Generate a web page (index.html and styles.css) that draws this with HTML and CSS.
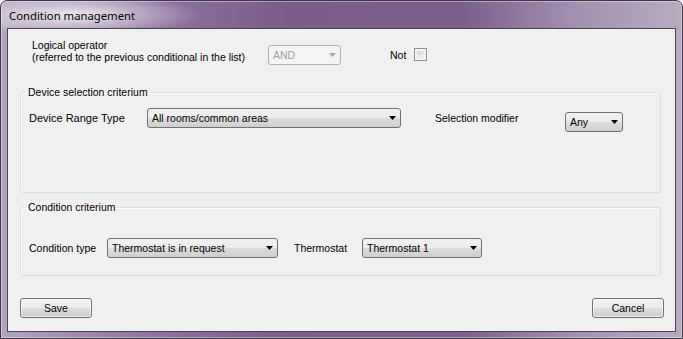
FILE: index.html
```html
<!DOCTYPE html>
<html>
<head>
    <title>Condition management</title>
    <meta charset="UTF-8">
    <link rel="stylesheet" href="styles.css">
</head>
<body>

<div class="window">
    <div class="titlebar">Condition management</div>

    <div class="client">

        <div class="operator-row">
            <div class="operator-label">
                Logical operator<br>
                (referred to the previous conditional in the list)
            </div>
            <div class="combo disabled operator-combo">
                <span>AND</span>
                <svg class="arrow" width="7" height="4" viewBox="0 0 7 4"><polygon points="0,0 7,0 3.5,4"/></svg>
            </div>
            <div class="not-label">Not</div>
            <div class="checkbox"></div>
        </div>

        <fieldset class="group device-group">
            <legend>Device selection criterium</legend>
            <div class="group-row">
                <div class="field-label range-label">Device Range Type</div>
                <div class="combo range-combo">
                    <span>All rooms/common areas</span>
                    <svg class="arrow" width="7" height="4" viewBox="0 0 7 4"><polygon points="0,0 7,0 3.5,4"/></svg>
                </div>
                <div class="field-label modifier-label">Selection modifier</div>
                <div class="combo modifier-combo">
                    <span>Any</span>
                    <svg class="arrow" width="7" height="4" viewBox="0 0 7 4"><polygon points="0,0 7,0 3.5,4"/></svg>
                </div>
            </div>
        </fieldset>

        <fieldset class="group condition-group">
            <legend>Condition criterium</legend>
            <div class="group-row">
                <div class="field-label type-label">Condition type</div>
                <div class="combo type-combo">
                    <span>Thermostat is in request</span>
                    <svg class="arrow" width="7" height="4" viewBox="0 0 7 4"><polygon points="0,0 7,0 3.5,4"/></svg>
                </div>
                <div class="field-label thermostat-label">Thermostat</div>
                <div class="combo thermostat-combo">
                    <span>Thermostat 1</span>
                    <svg class="arrow" width="7" height="4" viewBox="0 0 7 4"><polygon points="0,0 7,0 3.5,4"/></svg>
                </div>
            </div>
        </fieldset>

        <div class="button-row">
            <div class="button">Save</div>
            <div class="button">Cancel</div>
        </div>

    </div>
</div>

</body>
</html>
```

FILE: styles.css
```css
html {
    box-sizing: border-box;
}
*, *:before, *:after {
    box-sizing: inherit;
}

body{
    margin: 0;
    font-family: "Liberation Sans", Arial, sans-serif;
    font-size: 10.5px;
    color: #000;
    background: #fff;
}

/* window frame */

.window{
    width: 683px;
    height: 339px;
    padding: 27px 6px 6px 6px;
    border: 1px solid #3f3548;
    border-radius: 7px 7px 0 0;
    box-shadow: inset 0 0 0 1px rgba(255, 255, 255, 0.4);
    background:
        radial-gradient(ellipse 130px 22px at 70px 14px, rgba(238, 235, 240, 0.97), rgba(238, 235, 240, 0)),
        linear-gradient(90deg, #b3a3c0 0%, #8f72a0 22%, #7b5c8b 42%, #7d5f8d 68%, #a38fb0 84%, #b8abc0 100%);
    display: flex;
    flex-direction: column;
    position: relative;
}

.titlebar{
    position: absolute;
    left: 8px;
    top: 7px;
    font-family: "Noto Sans", "Open Sans", sans-serif;
    font-size: 11.3px;
    line-height: 16px;
    color: #000;
}

.client{
    flex: 1;
    border: 1px solid #4a4456;
    background-color: #f0f0f0;
    display: flex;
    flex-direction: column;
}

/* logical operator row */

.operator-row{
    display: flex;
    align-items: flex-start;
    margin: 10px 0 0 24px;
    height: 27px;
}

.operator-label{
    width: 236px;
    line-height: 12px;
}

.operator-combo{
    width: 73px;
    height: 21px;
    margin-top: 6px;
}

.not-label{
    margin: 10px 0 0 49px;
    line-height: 12px;
}

.checkbox{
    width: 13px;
    height: 13px;
    margin: 9px 0 0 8px;
    border: 1px solid #8e8f8f;
    background: linear-gradient(135deg, #cfcfcf, #f6f6f6);
    box-shadow: inset 0 0 0 2px #f4f4f4;
}

/* group boxes */

.group{
    margin: 20px 14px 0 12px;
    padding: 9px 8px 0 8px;
    border: 1px solid #d5dfe5;
    border-radius: 3px;
    box-shadow: inset 1px 1px 0 #fff;
}

.group legend{
    margin-left: -3px;
    padding: 0 2px;
    line-height: 13px;
}

.device-group{
    height: 107px;
}

.condition-group{
    margin-top: 8px;
    height: 75px;
    padding-top: 24px;
}

.group-row{
    display: flex;
    align-items: flex-start;
}

.field-label{
    line-height: 20px;
    flex: none;
}

.range-label{
    width: 118px;
    font-size: 11px;
}

.modifier-label{
    width: 130px;
    margin-left: 34px;
}

.type-label{
    width: 78px;
}

.thermostat-label{
    width: 68px;
    margin-left: 16px;
}

/* combo boxes */

.combo{
    display: flex;
    align-items: center;
    justify-content: space-between;
    height: 20px;
    padding: 0 4px 0 4px;
    border: 1px solid #707070;
    border-radius: 3px;
    background: linear-gradient(#f2f2f2 0%, #ebebeb 50%, #dddddd 51%, #cfcfcf 100%);
    flex: none;
}

.combo .arrow{
    fill: #000;
}

.combo.disabled{
    border-color: #adb2b5;
    background: #f4f4f4;
    color: #a0a0a0;
}

.combo.disabled .arrow{
    fill: #a8a8a8;
}

.range-combo{
    width: 254px;
}

.modifier-combo{
    width: 58px;
    margin-top: 4px;
}

.type-combo{
    width: 171px;
}

.thermostat-combo{
    width: 120px;
}

/* buttons */

.button-row{
    display: flex;
    justify-content: space-between;
    margin: 22px 11px 0 12px;
}

.button{
    width: 72px;
    height: 20px;
    line-height: 18px;
    text-align: center;
    border: 1px solid #707070;
    border-radius: 3px;
    background: linear-gradient(#f2f2f2 0%, #ebebeb 50%, #dddddd 51%, #cfcfcf 100%);
    box-shadow: inset 0 0 0 1px rgba(255, 255, 255, 0.6);
}
```
